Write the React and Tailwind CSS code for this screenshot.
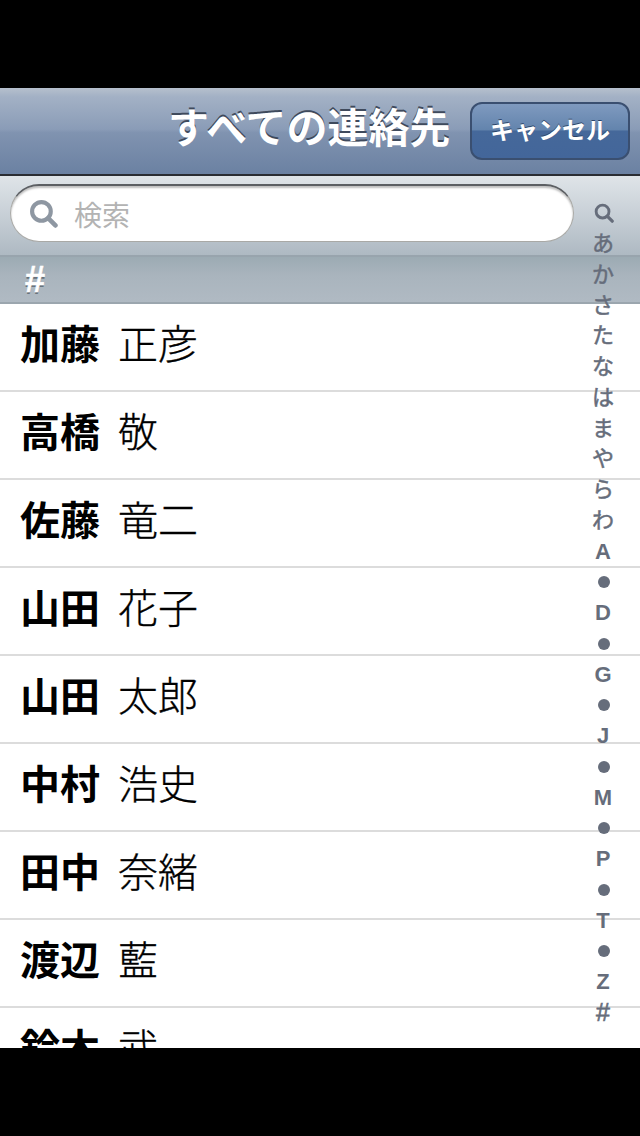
const FONT = "font-['Liberation_Sans','Noto_Sans_CJK_JP',sans-serif]";

const contacts = [
  ["加藤", "正彦"],
  ["高橋", "敬"],
  ["佐藤", "竜二"],
  ["山田", "花子"],
  ["山田", "太郎"],
  ["中村", "浩史"],
  ["田中", "奈緒"],
  ["渡辺", "藍"],
  ["鈴木", "武"],
];

const indexItems = ["search", "あ", "か", "さ", "た", "な", "は", "ま", "や", "ら", "わ", "A", "•", "D", "•", "G", "•", "J", "•", "M", "•", "P", "•", "T", "•", "Z", "#"];

function SearchGlyph({ className }) {
  return (
    <svg viewBox="0 0 28 28" fill="none" stroke="currentColor" className={className}>
      <circle cx="12" cy="12" r="9" strokeWidth="4" />
      <path d="M18.5 18.5 L25.5 25.5" strokeWidth="4.5" strokeLinecap="round" />
    </svg>
  );
}

function IndexBar() {
  return (
    <div className="absolute right-[19px] top-[110px] flex w-[36px] flex-col items-center text-[#666d7b]">
      {indexItems.map((item, i) => {
        let content;
        if (item === "search") {
          content = <SearchGlyph className="ml-[1px] h-[20px] w-[20px]" />;
        } else if (item === "•") {
          content = <span className="ml-[1px] h-3 w-3 rounded-full bg-[#666d7b]" />;
        } else if (item === "#") {
          content = <span className="text-[25px] font-normal leading-none [-webkit-text-stroke:0.6px_#666d7b]">{item}</span>;
        } else if (i <= 10) {
          content = <span className="text-[22px] font-normal leading-none [-webkit-text-stroke:0.5px_#666d7b]">{item}</span>;
        } else {
          content = <span className="text-[22px] font-bold leading-none">{item}</span>;
        }
        return (
          <div key={i} className="flex h-[30.75px] items-center justify-center">
            {content}
          </div>
        );
      })}
    </div>
  );
}

export default function App() {
  return (
    <div className={`flex h-[1136px] w-[640px] flex-col overflow-hidden bg-black ${FONT}`}>
      <div className="h-[88px] shrink-0" />
      <div className="relative flex h-[960px] shrink-0 flex-col overflow-hidden bg-white">
        {/* nav bar */}
        <div className="relative flex h-[88px] shrink-0 items-center border-b-2 border-[#2a2d33] bg-[linear-gradient(#b6c0cd_0%,#a3b1c5_10%,#8a9cb7_48%,#8093b0_52%,#6b81a2_100%)] pr-[10px]">
          <h1 className="absolute left-[168px] top-[15px] text-[41px] font-bold leading-[52px] text-white [text-shadow:0_-2px_0_#3f4a5c]">
            すべての連絡先
          </h1>
          <button className="ml-auto h-[58px] w-[160px] rounded-[12px] border-2 border-[#3a4f70] bg-[linear-gradient(#7f9abf_0%,#6384ad_48%,#45689a_50%,#43669a_100%)] text-[24px] font-bold text-white [text-shadow:0_-1px_0_#2c4468]">
            キャンセル
          </button>
        </div>

        {/* search bar */}
        <div className="flex h-[81px] shrink-0 items-center border-b-2 border-[#98a4ad] bg-[linear-gradient(#dfe4e8_0%,#c7cfd6_50%,#aeb9c2_100%)] pb-[6px] pl-[10px]">
          <div className="flex h-[58px] w-[564px] items-center rounded-full border border-[#a9a9a6] border-t-2 border-t-[#5c5f63] bg-white pl-[18px] shadow-[inset_0_2px_2px_rgba(0,0,0,0.25)]">
            <SearchGlyph className="h-[29px] w-[29px] text-[#8e97a2]" />
            <span className="ml-[16px] pt-[8px] text-[28px] text-[#b3b3b3]">検索</span>
          </div>
        </div>

        {/* section header */}
        <div className="flex h-[47px] shrink-0 items-center border-b-2 border-[#9ba6ae] bg-[linear-gradient(#9cabb3_0%,#a9b4bd_40%,#b0bac3_100%)] pl-[25px]">
          <span className="text-[36px] font-bold leading-none text-white [-webkit-text-stroke:0.6px_#ffffff] [text-shadow:0_2px_0_#68737c]">#</span>
        </div>

        {/* rows */}
        {contacts.map(([family, given], i) => (
          <div key={i} className="flex h-[88px] shrink-0 items-center border-b-2 border-[#dcdcdc] pb-[4px] pl-[20px] text-[40px] leading-none text-black">
            <span className="font-bold">{family}</span>
            <span className="ml-[18px] font-light [-webkit-text-stroke:0.35px_#000000]">{given}</span>
          </div>
        ))}

        <IndexBar />
      </div>
    </div>
  );
}
